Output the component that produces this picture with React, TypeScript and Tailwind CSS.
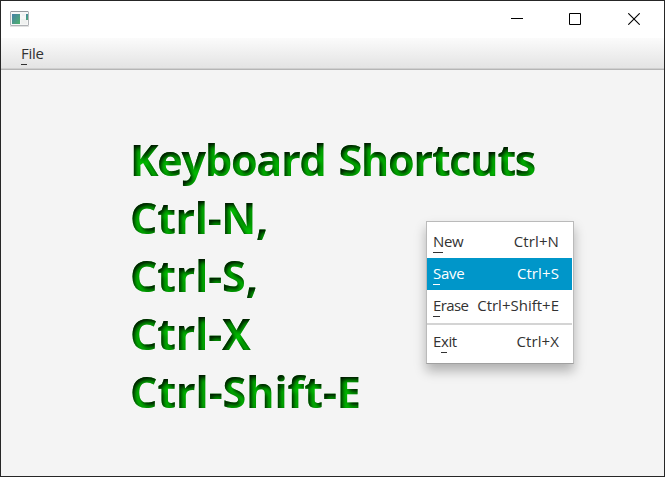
import React from "react";

const headings = [
  { text: "Keyboard Shortcuts", fit: "tracking-[-1.18px] [word-spacing:3px]" },
  { text: "Ctrl-N,", fit: "tracking-[-0.25px]" },
  { text: "Ctrl-S,", fit: "tracking-[-0.1px]" },
  { text: "Ctrl-X", fit: "tracking-[-0.1px]" },
  { text: "Ctrl-Shift-E", fit: "tracking-[0px]" },
];

type ItemProps = {
  before?: string;
  mnemonic: string;
  after: string;
  shortcut: string;
  active?: boolean;
  fit: string;
  keyFit: string;
  bar: string;
};

function Label({ before = "", mnemonic, after, bar, fit }: { before?: string; mnemonic: string; after: string; bar: string; fit: string }) {
  return (
    <span className={`whitespace-nowrap ${fit}`}>
      {before}
      <span className="relative">
        {mnemonic}
        <span className={`absolute top-[21px] left-0 h-px bg-current ${bar}`} />
      </span>
      {after}
    </span>
  );
}

function Item({ before, mnemonic, after, shortcut, active, fit, keyFit, bar }: ItemProps) {
  return (
    <div className={`flex h-8 items-start justify-between pt-[5px] pr-[13px] pl-[6px] leading-5 ${active ? "bg-[#0096c9] text-white" : ""}`}>
      <Label before={before} mnemonic={mnemonic} after={after} bar={bar} fit={fit} />
      <span className={`whitespace-nowrap ${keyFit}`}>{shortcut}</span>
    </div>
  );
}

export default function App() {
  return (
    <div className="relative flex h-[477px] w-[665px] flex-col overflow-hidden border border-[#262626] bg-[#f4f4f4] font-['Open_Sans','Noto_Sans',sans-serif] text-[15px] text-[#323232]">
      <svg className="absolute size-0">
        <filter id="inner" x="-5%" y="-5%" width="110%" height="110%" colorInterpolationFilters="sRGB">
          <feComponentTransfer in="SourceAlpha" result="inverse">
            <feFuncA type="linear" slope="-1" intercept="1" />
          </feComponentTransfer>
          <feGaussianBlur in="inverse" stdDeviation="2.8" />
          <feOffset dx="2" dy="2.5" result="shade" />
          <feFlood floodColor="#000" floodOpacity="0.95" />
          <feComposite in2="shade" operator="in" />
          <feComposite in2="SourceAlpha" operator="in" result="shadow" />
          <feMerge>
            <feMergeNode in="SourceGraphic" />
            <feMergeNode in="shadow" />
          </feMerge>
        </filter>
      </svg>

      <header className="flex h-[37px] shrink-0 items-start justify-between bg-white">
        <svg className="mt-[10px] ml-[9px]" width="19" height="16" viewBox="0 0 19 16">
          <defs>
            <linearGradient id="pane" x1="0" y1="0" x2="1" y2="1">
              <stop stopColor="#477fa8" />
              <stop offset="1" stopColor="#4fb36c" />
            </linearGradient>
          </defs>
          <rect x=".5" y=".5" width="18" height="14" rx=".5" fill="#f7f7f7" stroke="#b0b3b7" />
          <path d="M1 .5h17" stroke="#96999e" />
          <rect x="2" y="3" width="8" height="10" fill="url(#pane)" />
          <path d="M12 3h3v2h-3zM11 8h6v5h-6z" fill="#eff1f0" />
          <rect x="16" y="3" width="2" height="6" fill="url(#pane)" />
          <path d="M0 15.5h19" stroke="#e2e2e2" />
        </svg>
        <div className="mt-[12px] mr-[24px] flex">
          <svg className="mr-[46px]" width="12" height="12"><path d="M0 5.5h12" stroke="#000" /></svg>
          <svg className="mr-[47px]" width="12" height="12"><path d="M.5 .5h11v11H.5z" fill="none" stroke="#000" /></svg>
          <svg width="12" height="12"><path d="M.3 .3l11.4 11.4M11.7 .3L.3 11.7" stroke="#000" strokeWidth="1.1" /></svg>
        </div>
      </header>

      <nav className="flex h-[32px] shrink-0 items-start border-b border-[#b5b5b5] bg-linear-to-b from-[#fbfbfb] to-[#e3e3e3] pt-[5px] pl-[20px] leading-5 shadow-[inset_0_-1px_#cfcfcf]">
        <Label mnemonic="F" after="ile" bar="w-[6px]" fit="tracking-[-0.3px]" />
      </nav>

      <main className="flex flex-col pt-[61px] pl-[129px] text-[43px] leading-[58px] font-bold text-[#00c800] [filter:url(#inner)]">
        {headings.map((h) => (
          <div key={h.text} className={`whitespace-nowrap ${h.fit}`}>{h.text}</div>
        ))}
      </main>

      <div className="absolute top-[220px] left-[425px] flex h-[143px] w-[148px] flex-col border border-[#bababa] border-b-[#a0a0a0] bg-white pt-[4px] shadow-[0_7px_11px_rgba(0,0,0,0.28)]">
        <div className="mr-px flex flex-col">
          <Item mnemonic="N" after="ew" shortcut="Ctrl+N" fit="tracking-[-0.3px]" keyFit="tracking-[0.1px]" bar="w-[10px]" />
          <Item mnemonic="S" after="ave" shortcut="Ctrl+S" active fit="tracking-[-0.3px]" keyFit="tracking-[0.1px]" bar="w-[7px]" />
          <Item mnemonic="E" after="rase" shortcut="Ctrl+Shift+E" fit="tracking-[-0.6px]" keyFit="tracking-[0px]" bar="w-[7px]" />
          <div className="my-[1px] h-[2px] bg-[#d4d4d4]" />
          <Item before="E" mnemonic="x" after="it" shortcut="Ctrl+X" fit="tracking-[-0.4px]" keyFit="tracking-[0.1px]" bar="w-[6px]" />
        </div>
      </div>
    </div>
  );
}
